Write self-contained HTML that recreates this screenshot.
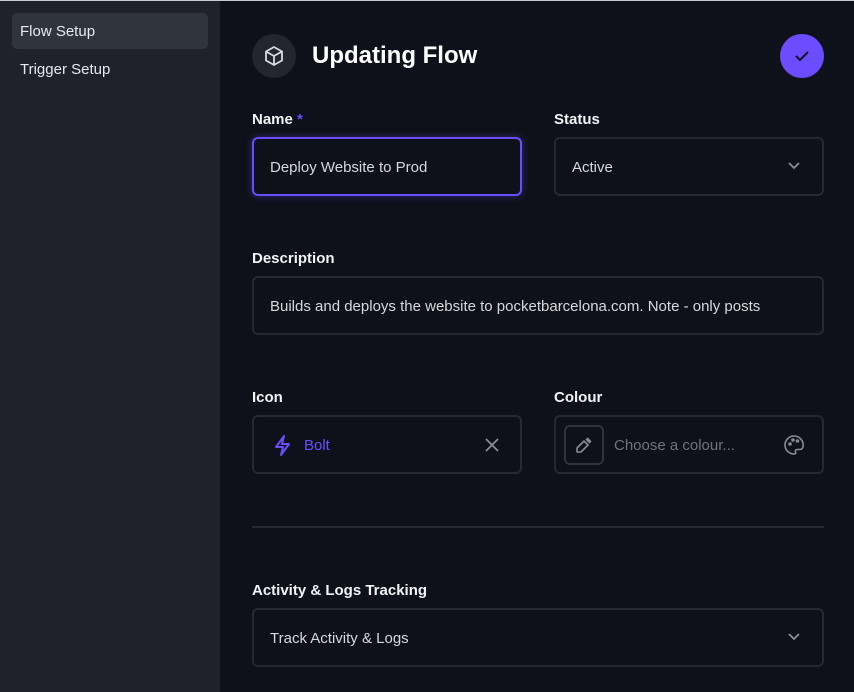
<!DOCTYPE html>
<html><head><style>
*{box-sizing:border-box;margin:0;padding:0}
body{width:854px;height:692px;background:#0e1119;font-family:"Liberation Sans",sans-serif;overflow:hidden;position:relative}
.side{position:absolute;left:0;top:1px;width:220px;height:691px;background:#1f222b}
.nav{position:absolute;left:12px;width:196px;height:36px;border-radius:5px;color:#e8e9ee;font-size:15px;line-height:37px;padding-left:8px}
.lbl{position:absolute;color:#f2f3f6;font-size:15px;font-weight:bold;margin-top:1px}
.box{position:absolute;height:59px;border:2px solid #262932;border-radius:6px;color:#d6d8de;font-size:15px;line-height:58px;padding-left:16px}
svg{position:absolute}
</style></head><body>
<div style="position:absolute;left:0;top:0;width:854px;height:1px;background:#c8c9d0"></div>
<div class="side">
<div class="nav" style="top:12px;background:#30343d">Flow Setup</div>
<div class="nav" style="top:50px">Trigger Setup</div>
</div>
<div style="position:absolute;left:252px;top:34px;width:44px;height:44px;border-radius:50%;background:#23262e"></div>
<svg style="left:262px;top:44px" width="24" height="24" viewBox="0 0 24 24" fill="none" stroke="#d8dae0" stroke-width="1.8" stroke-linejoin="round"><path d="M12 3l8 4.5v9L12 21l-8-4.5v-9z M4 7.5l8 4.5 8-4.5 M12 12v9"/></svg>
<div style="position:absolute;left:312px;top:42px;color:#fff;font-size:24px;font-weight:bold">Updating Flow</div>
<div style="position:absolute;left:780px;top:34px;width:44px;height:44px;border-radius:50%;background:#6b4dff"></div>
<svg style="left:792px;top:46px" width="20" height="20" viewBox="0 0 20 20" fill="none" stroke="#14121f" stroke-width="2"><path d="M4 10l4 4 8-8"/></svg>

<div class="lbl" style="left:252px;top:110px">Name <span style="color:#6b4dff">*</span></div>
<div class="box" style="left:252px;top:137px;width:270px;border-color:#6b4dff;box-shadow:0 0 8px rgba(107,77,255,.4)">Deploy Website to Prod</div>
<div class="lbl" style="left:554px;top:110px">Status</div>
<div class="box" style="left:554px;top:137px;width:270px">Active</div>
<svg style="left:787px;top:160px" width="14" height="12" viewBox="0 0 14 12" fill="none" stroke="#8a8d96" stroke-width="1.8"><path d="M2 3l5 5 5-5"/></svg>

<div class="lbl" style="left:252px;top:249px">Description</div>
<div class="box" style="left:252px;top:276px;width:572px;overflow:hidden;white-space:nowrap">Builds and deploys the website to pocketbarcelona.com. Note - only posts</div>

<div class="lbl" style="left:252px;top:388px">Icon</div>
<div class="box" style="left:252px;top:415px;width:270px;padding-left:50px;color:#6b4dff">Bolt</div>
<svg style="left:272px;top:434px" width="20" height="22" viewBox="0 0 20 22" fill="none" stroke="#6b4dff" stroke-width="2" stroke-linejoin="round"><path d="M12 2L4 13h7l-2 8 8-11h-7z"/></svg>
<svg style="left:484px;top:437px" width="16" height="16" viewBox="0 0 16 16" stroke="#8a8d96" stroke-width="1.8"><path d="M2 2l12 12M14 2L2 14"/></svg>
<div class="lbl" style="left:554px;top:388px">Colour</div>
<div class="box" style="left:554px;top:415px;width:270px;padding-left:58px;color:#70737c">Choose a colour...</div>
<div style="position:absolute;left:564px;top:425px;width:40px;height:40px;border:2px solid #30333c;border-radius:6px"></div>
<svg style="left:575px;top:436px" width="18" height="18" viewBox="0 0 18 18" fill="none" stroke="#8a8d96" stroke-width="1.6" stroke-linejoin="round"><path d="M11 3l4 4M9 5l4 4-7 7H2v-4z M12 2l4 4"/></svg>
<svg style="left:783px;top:434px" width="22" height="22" viewBox="0 0 22 22" fill="none" stroke="#8a8d96" stroke-width="1.6"><path d="M11 2a9 9 0 100 18c1.5 0 2-1 1.5-2s0-2.5 1.5-2.5H17a3 3 0 003-3A9 9 0 0011 2z"/><circle cx="7" cy="10" r="1"/><circle cx="10" cy="6" r="1"/><circle cx="14.5" cy="7" r="1"/></svg>

<div style="position:absolute;left:252px;top:526px;width:572px;height:2px;background:#262932"></div>

<div class="lbl" style="left:252px;top:581px">Activity &amp; Logs Tracking</div>
<div class="box" style="left:252px;top:608px;width:572px">Track Activity &amp; Logs</div>
<svg style="left:787px;top:631px" width="14" height="12" viewBox="0 0 14 12" fill="none" stroke="#8a8d96" stroke-width="1.8"><path d="M2 3l5 5 5-5"/></svg>
</body></html>
